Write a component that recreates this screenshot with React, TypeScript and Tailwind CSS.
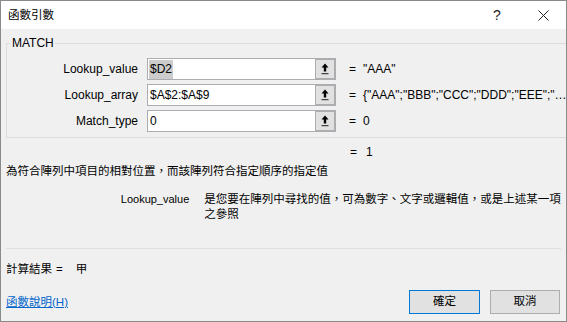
import React from "react";

function RefButton() {
  return (
    <div className="w-[20px] h-[20px] border border-[#adadad] bg-[#e1e1e1] flex items-center justify-center shrink-0">
      <svg width="18" height="18" viewBox="0 0 18 18">
        <path d="M9 3.5 L5.5 7.5 H7.8 V11.5 H10.2 V7.5 H12.5 Z" fill="#000" />
        <rect x="5.5" y="13" width="7" height="1" fill="#444" />
        <rect x="5.5" y="14" width="7" height="1" fill="#bbb" />
      </svg>
    </div>
  );
}

function Row({ label, value, result, selected }: { label: string; value: string; result: string; selected?: boolean }) {
  return (
    <div className="flex items-center h-[22px]">
      <div className="w-[131px] text-right text-[12px] leading-[14px]">{label}</div>
      <div className="ml-[9px] w-[189px] h-[22px] border border-[#abadb3] bg-white flex items-center">
        <div className="flex-1 h-full flex items-center pl-[1px] text-[12px] leading-[14px]">
          {selected ? <span className="bg-[#cccccc] h-[19px] flex items-center px-[1px]">{value}</span> : <span className="px-[1px]">{value}</span>}
        </div>
        <RefButton />
      </div>
      <span className="ml-[13px] text-[12px] leading-[14px]">=</span>
      <span className="ml-[7px] text-[12px] leading-[14px] whitespace-nowrap">{result}</span>
    </div>
  );
}

export default function App() {
  return (
    <div className="w-[567px] h-[322px] flex flex-col border border-[#8a8a8a] bg-[#f0f0f0] font-['Liberation_Sans','Noto_Sans_CJK_TC',sans-serif] text-black overflow-hidden">
      <div className="h-[28px] bg-white flex items-center pl-[7px] shrink-0">
        <span className="text-[11.5px] leading-[14px]">函數引數</span>
        <div className="ml-auto flex items-center h-full">
          <div className="w-[46px] h-full flex items-center justify-center text-[14px] text-[#222]">?</div>
          <div className="w-[46px] h-full flex items-center justify-center">
            <svg width="11" height="11" viewBox="0 0 11 11">
              <path d="M0.5 0.5 L10.5 10.5 M10.5 0.5 L0.5 10.5" stroke="#222" strokeWidth="1" />
            </svg>
          </div>
        </div>
      </div>
      <div className="flex-1 flex flex-col px-[5px]">
        <fieldset className="mt-[7px] border border-[#dcdcdc] pt-[8px] pb-[5px] flex flex-col gap-[4px]">
          <legend className="ml-[4px] px-[1px] text-[12px] leading-[14px]">MATCH</legend>
          <Row label="Lookup_value" value="$D2" result={'"AAA"'} selected />
          <Row label="Lookup_array" value="$A$2:$A$9" result={'{"AAA";"BBB";"CCC";"DDD";"EEE";"…'} />
          <Row label="Match_type" value="0" result="0" />
        </fieldset>
        <div className="mt-[7px] ml-[344px] flex items-center h-[14px] text-[12px] leading-[14px]">
          <span>=</span>
          <span className="ml-[9px]">1</span>
        </div>
        <div className="mt-[5px] text-[11.5px] leading-[15px]">為符合陣列中項目的相對位置，而該陣列符合指定順序的指定值</div>
        <div className="mt-[13px] flex">
          <div className="w-[185px] text-right text-[11px] leading-[15px]">Lookup_value</div>
          <div className="ml-[15px] w-[360px] text-[11.5px] leading-[15px]">是您要在陣列中尋找的值，可為數字、文字或邏輯值，或是上述某一項之參照</div>
        </div>
        <div className="mt-[26px] h-px bg-[#dfdfdf]" />
        <div className="mt-[13px] flex items-center h-[14px] text-[11.5px] leading-[14px]">
          <span>計算結果</span>
          <span className="ml-[4px]">=</span>
          <span className="ml-[13px]">甲</span>
        </div>
        <div className="mt-[14px] flex items-center h-[24px]">
          <span className="text-[11.5px] leading-[14px] text-[#0066cc] underline">函數說明(H)</span>
          <div className="ml-auto mr-[1px] flex gap-[10px]">
            <div className="w-[71px] h-[24px] border border-[#0078d7] bg-[#e1e1e1] flex items-center justify-center text-[11.5px]">確定</div>
            <div className="w-[70px] h-[24px] border border-[#adadad] bg-[#e1e1e1] flex items-center justify-center text-[11.5px]">取消</div>
          </div>
        </div>
      </div>
    </div>
  );
}
